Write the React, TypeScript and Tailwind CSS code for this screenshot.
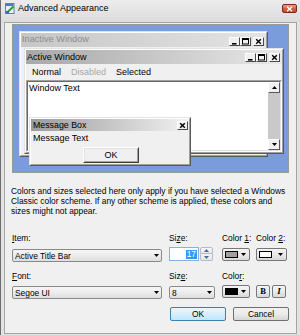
import React from "react";

type Kind = "min" | "max" | "close";

const outerRaised =
  "border border-t-[#e3e3e3] border-l-[#e3e3e3] border-r-[#5a5a5a] border-b-[#5a5a5a]";
const innerRaised =
  "border border-t-white border-l-white border-r-[#a0a0a0] border-b-[#a0a0a0]";

function CapBtn({ kind }: { kind: Kind }) {
  return (
    <div className="w-[11px] h-[9px] shrink-0 bg-[#f0f0f0] border border-t-white border-l-white border-r-[#4a4a4a] border-b-[#4a4a4a] flex items-center justify-center">
      <svg width="9" height="7" viewBox="0 0 9 7" className="block">
        {kind === "min" && <rect x="2" y="5" width="4.5" height="1.6" fill="#000" />}
        {kind === "max" && (
          <>
            <rect x="1.5" y="0.5" width="6" height="5.5" fill="none" stroke="#000" strokeWidth="1" />
            <rect x="1" y="0" width="7" height="2" fill="#000" />
          </>
        )}
        {kind === "close" && (
          <path d="M2.2 1.2 L6.8 5.8 M6.8 1.2 L2.2 5.8" stroke="#000" strokeWidth="1.4" />
        )}
      </svg>
    </div>
  );
}

function CapGroup() {
  return (
    <div className="flex items-center shrink-0">
      <CapBtn kind="min" />
      <CapBtn kind="max" />
      <div className="w-[2px]" />
      <CapBtn kind="close" />
    </div>
  );
}

function ScrollBtn({ up }: { up?: boolean }) {
  return (
    <div className="h-[11px] w-full shrink-0 bg-[#f0f0f0] border border-t-white border-l-white border-r-[#5a5a5a] border-b-[#5a5a5a] flex items-center justify-center">
      <svg width="5" height="3" viewBox="0 0 5 3" className="block">
        <path d={up ? "M0 3 L2.5 0 L5 3 Z" : "M0 0 L5 0 L2.5 3 Z"} fill="#000" />
      </svg>
    </div>
  );
}

function DownArrow() {
  return (
    <svg width="5" height="3" viewBox="0 0 5 3" className="block shrink-0">
      <path d="M0 0 L5 0 L2.5 3 Z" fill="#000" />
    </svg>
  );
}

function Preview() {
  return (
    <div className="relative mt-[1px] h-[149px] shrink-0 border border-[#9a9a9a] bg-[#7b9cdc] overflow-hidden font-['Liberation_Sans',Arial,sans-serif]">
      {/* Inactive window */}
      <div className={`absolute left-[6px] top-[6px] w-[249px] h-[126px] ${outerRaised}`}>
        <div className={`w-full h-full ${innerRaised} bg-[#f0f0f0] flex flex-col`}>
          <div className="h-[14px] shrink-0 flex items-end pb-[1px] pl-[1px] pr-[2px] bg-linear-to-r from-[#c6c6c6] to-[#e4e4e4]">
            <span className="flex-1 self-center text-[9.2px] leading-[11px] text-[#8c8c8c]">
              Inactive Window
            </span>
            <CapGroup />
          </div>
        </div>
      </div>

      {/* Active window */}
      <div className={`absolute left-[11px] top-[23px] w-[260px] h-[106px] ${outerRaised}`}>
        <div className={`w-full h-full ${innerRaised} bg-[#f0f0f0] flex flex-col`}>
          <div className="h-[14px] shrink-0 flex items-center pl-[1px] pr-[2px] bg-linear-to-r from-[#a8a8a8] to-[#e8e8e8]">
            <span className="flex-1 text-[9.1px] leading-[11px] text-black">Active Window</span>
            <CapGroup />
          </div>
          <div className="h-[16px] shrink-0 flex items-center gap-[10px] pl-[6px] text-[9px] leading-[11px]">
            <span>Normal</span>
            <span className="text-[#a6a6a6]">Disabled</span>
            <span>Selected</span>
          </div>
          <div className="flex-1 border border-t-[#a0a0a0] border-l-[#a0a0a0] border-r-white border-b-white">
            <div className="w-full h-full border border-t-[#696969] border-l-[#696969] border-r-[#e3e3e3] border-b-[#e3e3e3] bg-white flex">
              <div className="flex-1 pl-[1px] pt-[1px] text-[9px] leading-[11px]">Window Text</div>
              <div className="w-[12px] flex flex-col bg-[#c9c9c9]">
                <ScrollBtn up />
                <div className="flex-1" />
                <ScrollBtn />
              </div>
            </div>
          </div>
        </div>
      </div>

      {/* Message box */}
      <div className={`absolute left-[16px] top-[92px] w-[162px] h-[49px] ${outerRaised}`}>
        <div className={`w-full h-full ${innerRaised} bg-[#f0f0f0] flex flex-col`}>
          <div className="h-[12px] shrink-0 flex items-center pl-[2px] pr-[1px] bg-linear-to-r from-[#9c9c9c] to-[#f2f2f2]">
            <span className="flex-1 text-[8.8px] leading-[11px] text-black">Message Box</span>
            <CapBtn kind="close" />
          </div>
          <div className="h-[14px] shrink-0 flex items-center pl-[2px] text-[9px] leading-[11px]">
            Message Text
          </div>
          <div className="mt-[2px] ml-[52px] w-[56px] h-[16px] border border-t-white border-l-white border-r-[#404040] border-b-[#404040]">
            <div className="w-full h-full border border-t-[#e3e3e3] border-l-[#e3e3e3] border-r-[#a0a0a0] border-b-[#a0a0a0] flex items-center justify-center text-[9px] leading-[11px]">
              OK
            </div>
          </div>
        </div>
      </div>
    </div>
  );
}

function Combo({ text, w }: { text: string; w: string }) {
  return (
    <div
      className={`${w} h-[13px] border border-[#8a8a8a] rounded-[2px] bg-linear-to-b from-[#f6f6f6] via-[#ececec] to-[#dedede] flex items-center pl-[2px] pr-[2px]`}
    >
      <span className="flex-1 text-[8.4px] leading-[10px] whitespace-nowrap">{text}</span>
      <DownArrow />
    </div>
  );
}

function ColorBtn({ swatch, w }: { swatch: string; w: string }) {
  return (
    <div
      className={`${w} h-[13px] border border-[#777] rounded-[2px] bg-linear-to-b from-[#f4f4f4] via-[#eaeaea] to-[#d8d8d8] flex items-center justify-between pl-[2px] pr-[3px]`}
    >
      <div className={`w-[13px] h-[7px] border border-black ${swatch}`} />
      <DownArrow />
    </div>
  );
}

export default function App() {
  return (
    <div className="w-[300px] h-[335px] flex flex-col bg-[#e2e2e2] border-l border-[#6d6d6d] overflow-hidden font-['Liberation_Sans',Arial,sans-serif] text-black select-none">
      {/* Title bar */}
      <div className="h-[22px] shrink-0 flex items-start bg-linear-to-b from-[#ececec] to-[#dcdcdc]">
        <svg width="10" height="11" viewBox="0 0 10 11" className="block ml-[4px] mt-[3px] shrink-0">
          <rect x="0.5" y="0.5" width="8.5" height="10" fill="#eef2f8" stroke="#6b7f99" />
          <rect x="1" y="1" width="7.5" height="2" fill="#4d7cc6" />
          <path d="M2 9.5 L8.5 3.5" stroke="#2f9a3a" strokeWidth="2" />
          <rect x="1" y="8" width="3" height="2.5" fill="#2a6fb8" />
        </svg>
        <span className="ml-[3px] mt-[3px] text-[9px] leading-[11px]">Advanced Appearance</span>
        <div className="ml-auto mr-[3px] mt-[4px] w-[15px] h-[9px] rounded-[2px] border border-[#7a2a1c] bg-linear-to-b from-[#eba28c] via-[#d65e42] to-[#c9492e] flex items-center justify-center">
          <svg width="7" height="6" viewBox="0 0 7 6" className="block">
            <path d="M1 0.8 L6 5.2 M6 0.8 L1 5.2" stroke="#fff" strokeWidth="1.5" />
          </svg>
        </div>
      </div>

      {/* Client */}
      <div className="flex-1 px-[3px] pb-[1px] flex flex-col">
        <div className="flex-1 border border-[#a5a5a5] bg-[#f0f0f0] flex flex-col px-[7px]">
          <Preview />

          <p className="mt-[13px] -ml-px text-[8.4px] leading-[10px] whitespace-nowrap">
            Colors and sizes selected here only apply if you have selected a Windows
            <br />
            Classic color scheme. If any other scheme is applied, these colors and
            <br />
            sizes might not appear.
          </p>

          {/* Row 1 labels */}
          <div className="mt-[17px] grid grid-cols-[157px_53px_34px_31px] text-[8.4px] leading-[10px]">
            <span>
              <u className="underline-offset-1">I</u>tem:
            </span>
            <span>
              Si<u className="underline-offset-1">z</u>e:
            </span>
            <span>
              Color <u className="underline-offset-1">1</u>:
            </span>
            <span>
              Color <u className="underline-offset-1">2</u>:
            </span>
          </div>

          {/* Row 1 controls */}
          <div className="mt-[4px] grid grid-cols-[157px_53px_34px_31px] items-start">
            <div className="mt-[2px]">
              <Combo text="Active Title Bar" w="w-[150px]" />
            </div>
            <div className="flex h-[14px] w-[44px]">
              <div className="w-[30px] h-full border border-[#8eb0d8] bg-white flex items-center justify-end pr-[1px]">
                <span className="bg-[#3399ff] text-white text-[8.4px] leading-[9px] px-[1px]">17</span>
              </div>
              <div className="ml-px w-[13px] h-full flex flex-col">
                <div className="h-[7px] border border-[#b7bcc4] rounded-t-[2px] bg-linear-to-b from-[#f6f8fa] to-[#e4e8ee] flex items-center justify-center">
                  <svg width="5" height="3" viewBox="0 0 5 3" className="block">
                    <path d="M0 3 L2.5 0 L5 3 Z" fill="#4d6a94" />
                  </svg>
                </div>
                <div className="h-[7px] border border-t-0 border-[#b7bcc4] rounded-b-[2px] bg-linear-to-b from-[#f2f4f7] to-[#e0e4ea] flex items-center justify-center">
                  <svg width="5" height="3" viewBox="0 0 5 3" className="block">
                    <path d="M0 0 L5 0 L2.5 3 Z" fill="#4d6a94" />
                  </svg>
                </div>
              </div>
            </div>
            <div className="mt-[1px]">
              <ColorBtn swatch="bg-[#a0a0a0]" w="w-[28px]" />
            </div>
            <div className="mt-[1px]">
              <ColorBtn swatch="bg-white" w="w-[31px]" />
            </div>
          </div>

          {/* Row 2 labels */}
          <div className="mt-[9px] grid grid-cols-[157px_53px_34px_31px] text-[8.4px] leading-[10px]">
            <span>
              <u className="underline-offset-1">F</u>ont:
            </span>
            <span>
              Siz<u className="underline-offset-1">e</u>:
            </span>
            <span>
              Colo<u className="underline-offset-1">r</u>:
            </span>
            <span />
          </div>

          {/* Row 2 controls */}
          <div className="mt-[4px] grid grid-cols-[157px_53px_34px_31px] items-start">
            <div className="mt-[1px]">
              <Combo text="Segoe UI" w="w-[150px]" />
            </div>
            <div className="mt-[1px]">
              <Combo text="8" w="w-[46px]" />
            </div>
            <div>
              <ColorBtn swatch="bg-black" w="w-[28px]" />
            </div>
            <div className="flex gap-[2px]">
              <div className="w-[14px] h-[13px] border border-[#777] rounded-[2px] bg-linear-to-b from-[#f4f4f4] via-[#eaeaea] to-[#d8d8d8] flex items-center justify-center font-['Liberation_Serif',serif] font-bold text-[8.5px] leading-none">
                B
              </div>
              <div className="w-[14px] h-[13px] border border-[#777] rounded-[2px] bg-linear-to-b from-[#f4f4f4] via-[#eaeaea] to-[#d8d8d8] flex items-center justify-center font-['Liberation_Serif',serif] italic font-bold text-[9px] leading-none">
                I
              </div>
            </div>
          </div>

          {/* Buttons */}
          <div className="mt-[8px] flex justify-end gap-[7px]">
            <div className="w-[56px] h-[14px] border border-[#3c7fb1] rounded-[2px] bg-linear-to-b from-[#eaf6fd] via-[#d9f0fc] to-[#bee6fd] flex items-center justify-center text-[8.4px] leading-none">
              OK
            </div>
            <div className="w-[56px] h-[14px] border border-[#707070] rounded-[2px] bg-linear-to-b from-[#f2f2f2] via-[#ebebeb] to-[#d6d6d6] flex items-center justify-center text-[8.4px] leading-none">
              Cancel
            </div>
          </div>
        </div>
      </div>
    </div>
  );
}
